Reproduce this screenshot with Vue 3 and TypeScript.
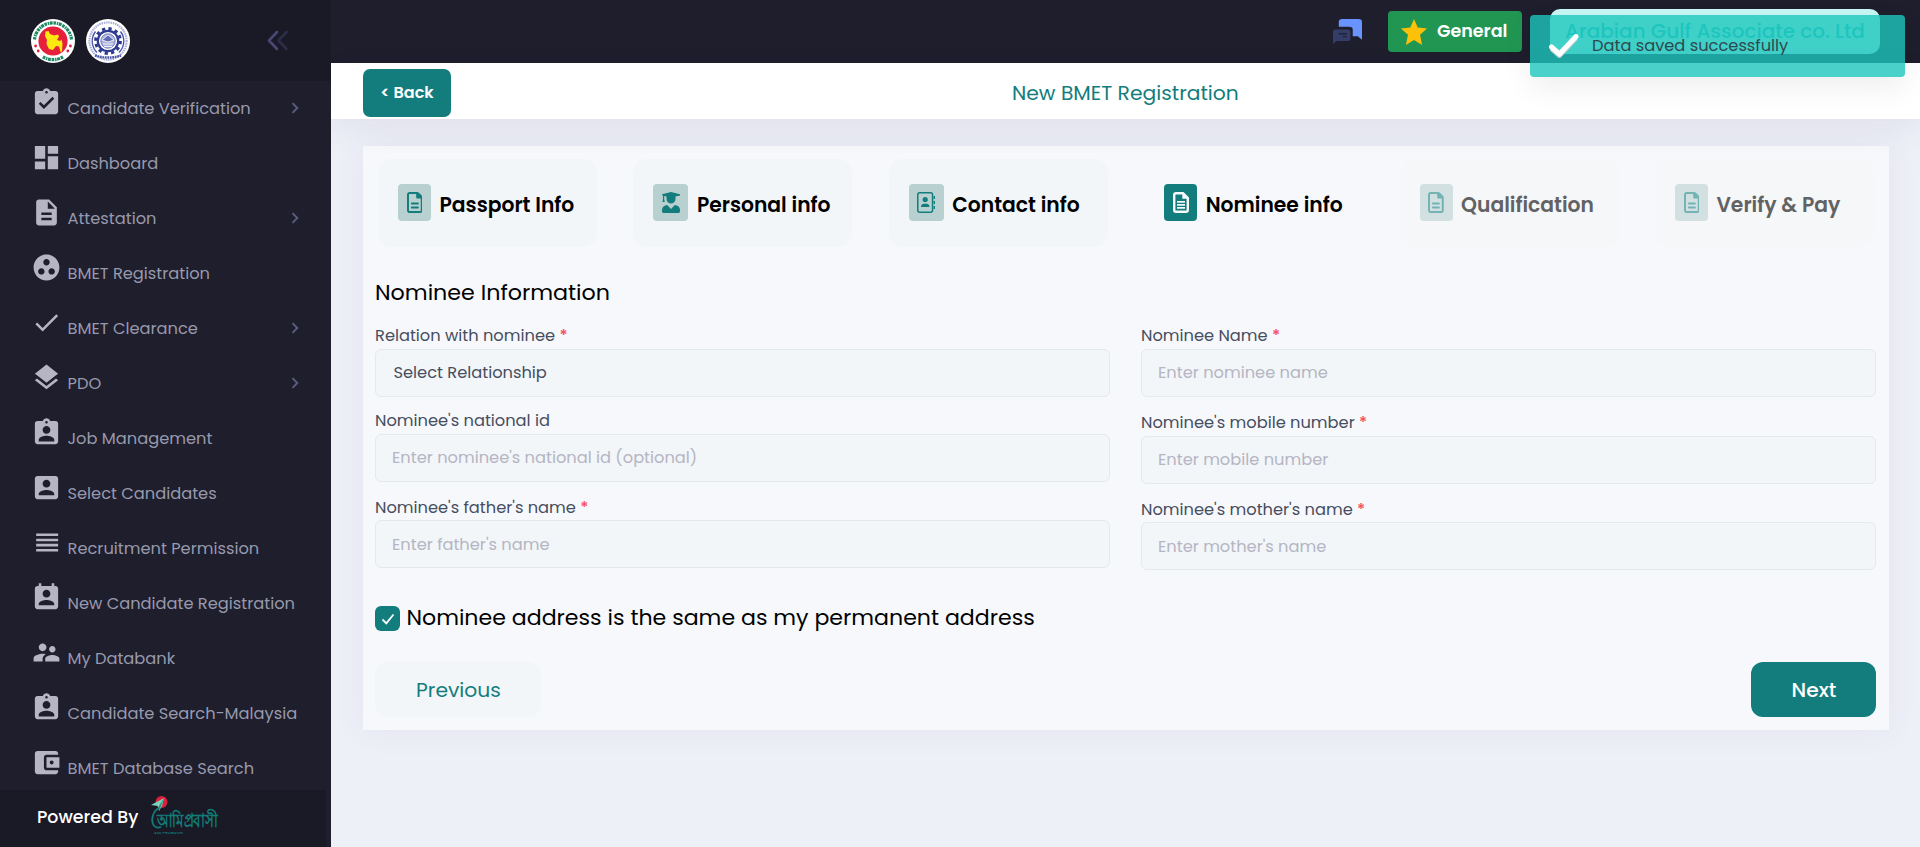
<script setup lang="ts">
import { ref } from 'vue'

interface MenuItem { label: string; icon: string; more?: boolean }
interface Step { label: string; icon: 'file' | 'grad' | 'book' | 'lines'; state: 'done' | 'active' | 'todo' }
interface Field { label: string; required: boolean; text: string; select?: boolean }

const clip = 'M19 3h-4.18C14.4 1.84 13.3 1 12 1c-1.3 0-2.4.84-2.82 2H5c-1.1 0-2 .9-2 2v14c0 1.1.9 2 2 2h14c1.1 0 2-.9 2-2V5c0-1.1-.9-2-2-2zm-7 0c.55 0 1 .45 1 1s-.45 1-1 1-1-.45-1-1 .45-1 1-1z'
const badge = clip + 'm0 4c1.66 0 3 1.34 3 3s-1.34 3-3 3-3-1.34-3-3 1.34-3 3-3zm6 12H6v-1.4c0-2 4-3.1 6-3.1s6 1.1 6 3.1V19z'

const menu: MenuItem[] = [
  { label: 'Candidate Verification', more: true, icon: clip + 'm-2 14l-4-4 1.41-1.41L10 14.17l6.59-6.59L18 9l-8 8z' },
  { label: 'Dashboard', icon: 'M3 13h8V3H3v10zm0 8h8v-6H3v6zm10 0h8V11h-8v10zm0-18v6h8V3h-8z' },
  { label: 'Attestation', more: true, icon: 'M14 2H6c-1.1 0-1.99.9-1.99 2L4 20c0 1.1.89 2 1.99 2H18c1.1 0 2-.9 2-2V8l-6-6zm2 16H8v-2h8v2zm0-4H8v-2h8v2zm-3-5V3.5L18.5 9H13z' },
  { label: 'BMET Registration', icon: 'M12 2C6.48 2 2 6.48 2 12s4.48 10 10 10 10-4.48 10-10S17.52 2 12 2zM8 17.5c-1.38 0-2.5-1.12-2.5-2.5s1.12-2.5 2.5-2.5 2.5 1.12 2.5 2.5-1.12 2.5-2.5 2.5zM9.5 8c0-1.38 1.12-2.5 2.5-2.5s2.5 1.12 2.5 2.5-1.12 2.5-2.5 2.5S9.5 9.38 9.5 8zm6.5 9.5c-1.38 0-2.5-1.12-2.5-2.5s1.12-2.5 2.5-2.5 2.5 1.12 2.5 2.5-1.12 2.5-2.5 2.5z' },
  { label: 'BMET Clearance', more: true, icon: 'M9 16.17L4.83 12l-1.42 1.41L9 19 21 7l-1.41-1.41z' },
  { label: 'PDO', more: true, icon: 'M11.99 18.54l-7.37-5.73L3 14.07l9 7 9-7-1.63-1.27-7.38 5.74zM12 16l7.36-5.73L21 9l-9-7-9 7 1.63 1.27L12 16z' },
  { label: 'Job Management', icon: badge },
  { label: 'Select Candidates', icon: 'M3 5v14c0 1.1.89 2 2 2h14c1.1 0 2-.9 2-2V5c0-1.1-.9-2-2-2H5c-1.11 0-2 .9-2 2zm12 4c0 1.66-1.34 3-3 3s-3-1.34-3-3 1.34-3 3-3 3 1.34 3 3zm-9 8c0-2 4-3.1 6-3.1s6 1.1 6 3.1v1H6v-1z' },
  { label: 'Recruitment Permission', icon: 'M4 15h17v-2H4v2zm0 4h17v-2H4v2zm0-8h17V9H4v2zm0-6v2h17V5H4z' },
  { label: 'New Candidate Registration', icon: 'M19 3h-1V1h-2v2H8V1H6v2H5c-1.11 0-2 .9-2 2v14c0 1.1.89 2 2 2h14c1.1 0 2-.9 2-2V5c0-1.1-.9-2-2-2zm-7 3c1.66 0 3 1.34 3 3s-1.34 3-3 3-3-1.34-3-3 1.34-3 3-3zm6 12H6v-1c0-2 4-3.1 6-3.1s6 1.1 6 3.1v1z' },
  { label: 'My Databank', icon: 'M16.5 12c1.38 0 2.49-1.12 2.49-2.5S17.88 7 16.5 7C15.12 7 14 8.12 14 9.5s1.12 2.5 2.5 2.5zM9 11c1.66 0 2.99-1.34 2.99-3S10.66 5 9 5C7.34 5 6 6.34 6 8s1.34 3 3 3zm7.5 3c-1.83 0-5.5.92-5.5 2.75V19h11v-2.25c0-1.83-3.67-2.75-5.5-2.75zM9 13c-2.33 0-7 1.17-7 3.5V19h7v-2.25c0-.85.33-2.34 2.37-3.47C10.5 13.1 9.66 13 9 13z' },
  { label: 'Candidate Search-Malaysia', icon: badge },
  { label: 'BMET Database Search', icon: 'M21 18v1c0 1.1-.9 2-2 2H5c-1.11 0-2-.9-2-2V5c0-1.1.89-2 2-2h14c1.1 0 2 .9 2 2v1h-9c-1.11 0-2 .9-2 2v8c0 1.1.89 2 2 2h9zm-9-2h10V8H12v8zm4-2.5c-.83 0-1.5-.67-1.5-1.5s.67-1.5 1.5-1.5 1.5.67 1.5 1.5-.67 1.5-1.5 1.5z' },
]

const steps: Step[] = [
  { label: 'Passport Info', icon: 'file', state: 'done' },
  { label: 'Personal info', icon: 'grad', state: 'done' },
  { label: 'Contact info', icon: 'book', state: 'done' },
  { label: 'Nominee info', icon: 'lines', state: 'active' },
  { label: 'Qualification', icon: 'file', state: 'todo' },
  { label: 'Verify & Pay', icon: 'file', state: 'todo' },
]

const columns: Field[][] = [
  [
    { label: 'Relation with nominee', required: true, text: 'Select Relationship', select: true },
    { label: "Nominee's national id", required: false, text: "Enter nominee's national id (optional)" },
    { label: "Nominee's father's name", required: true, text: "Enter father's name" },
  ],
  [
    { label: 'Nominee Name', required: true, text: 'Enter nominee name' },
    { label: "Nominee's mobile number", required: true, text: 'Enter mobile number' },
    { label: "Nominee's mother's name", required: true, text: "Enter mother's name" },
  ],
]

const sameAddress = ref(true)
</script>

<template>
  <div class="page">
    <aside class="side">
      <div class="brand">
        <svg class="seal" viewBox="0 0 44 44">
          <circle cx="22" cy="22" r="22" fill="#fff" />
          <path d="M3.500 20.500A18.600 18.600 0 0 1 40.500 20.500" fill="none" stroke="#1d8a63" stroke-width="3.200" stroke-dasharray="2.600 .8 1.400 .6 3 .8" />
          <path d="M12 37.800A18.600 18.600 0 0 0 32 37.800" fill="none" stroke="#1d8a63" stroke-width="3.200" stroke-dasharray="2.600 .8 1.400 .6 3 .8" />
          <circle cx="22" cy="22" r="14.600" fill="#e5203b" />
          <path fill="#fde910" d="M14.500 12.500l3-.5 1.500 3 4 1.500 4-1 1 2-2 3.500 3 1 1.500-1.500 1 4-.5 8-1.500.5-1.500-5.500-3-.5-3 4-4-1-2.500-5 .5-4-2-4z" />
          <g fill="#e5203b"><circle cx="4.600" cy="27" r="1.400" /><circle cx="7.200" cy="32" r="1.400" /><circle cx="39.400" cy="27" r="1.400" /><circle cx="36.800" cy="32" r="1.400" /></g>
        </svg>
        <svg class="seal" viewBox="0 0 44 44">
          <circle cx="22" cy="22" r="22" fill="#fff" />
          <circle cx="22" cy="22" r="18.600" fill="none" stroke="#a9aed8" stroke-width="2.200" stroke-dasharray="1.500 .8" />
          <path d="M9.500 12.500A15.800 15.800 0 0 0 11 33.500M34.500 12.500A15.800 15.800 0 0 1 33 33.500" fill="none" stroke="#4d57a8" stroke-width="1.400" />
          <circle cx="22" cy="22" r="12.400" fill="none" stroke="#2d3a8f" stroke-width="3" stroke-dasharray="3.250 3.250" />
          <circle cx="22" cy="22" r="10.200" fill="#fff" stroke="#2d3a8f" stroke-width="2.200" />
          <circle cx="22" cy="22" r="7.200" fill="#aeb5dc" stroke="#5f6ab2" stroke-width=".8" />
          <path d="M16 21l6-5 6 5-6 2zM17 25h10M18 27.500h8" fill="#5f6ab2" stroke="#fff" stroke-width=".8" />
          <path d="M9 36.500q13 4 26 0" fill="none" stroke="#4d57a8" stroke-width="2.400" stroke-dasharray="1.800 .7" />
        </svg>
        <svg class="collapse" viewBox="0 0 22 22" fill="none" stroke-width="2.600" stroke-linecap="round" stroke-linejoin="round">
          <path d="M19.500 2L11.500 10.500l8 8.500" stroke="#2e2c48" />
          <path d="M10 2L2 10.500l8 8.500" stroke="#494773" />
        </svg>
      </div>
      <nav class="menu">
        <a v-for="item in menu" :key="item.label" class="item">
          <svg class="item-icon" viewBox="0 0 24 24"><path :d="item.icon" /></svg>
          <span class="item-label">{{ item.label }}</span>
          <svg v-if="item.more" class="chevron" viewBox="0 0 8 12"><path d="M1.500 1.200L6.300 6l-4.800 4.800" /></svg>
        </a>
      </nav>
      <div class="powered">
        <span>Powered By</span>
        <svg class="logo" viewBox="0 0 68 42">
          <circle cx="10.500" cy="7" r="6" fill="#d9213c" />
          <path d="M0 10L13 3l-2 8-3 5-1-5z" fill="#7fd0bd" />
          <path d="M13 3l-5 8v5z" fill="#1f8f80" />
          <path d="M8 13C2 16 0 24 2 29c1.500 3.500 5 4 8 3" fill="none" stroke="#127c78" stroke-width="1.800" />
          <text x="6" y="31.500" textLength="61" lengthAdjust="spacingAndGlyphs" class="logo-text">আমিপ্রবাসী</text>
          <text x="3" y="38.500" textLength="29" lengthAdjust="spacingAndGlyphs" class="logo-small">AMI PROBASHI</text>
        </svg>
      </div>
    </aside>

    <main class="main">
      <header class="top">
        <svg class="chat" viewBox="0 0 25 26" preserveAspectRatio="none">
          <path d="M8 0h14a3 3 0 0 1 3 3v18.500l-3.600-3.500H17v-7a3 3 0 0 0-3-3H5V3a3 3 0 0 1 3-3z" fill="#6993ff" />
          <path d="M2.500 11h10A2.500 2.500 0 0 1 15 13.500v7a2.500 2.500 0 0 1-2.500 2.500H3L0 26V13.500A2.500 2.500 0 0 1 2.500 11z" fill="#333d67" />
          <path d="M5 15.500h7M8.500 18.500h3.500" stroke="#1e1e2d" stroke-width="1.200" />
        </svg>
        <div class="general">
          <svg viewBox="0 0 26 26"><path fill="#ffc107" d="M13 0l3.700 8.600 9.300.9-7 6.200 2.100 10.300L13 21l-8.100 5 2.100-10.300-7-6.200 9.300-.9z" /></svg>
          <span>General</span>
        </div>
        <div class="company">Arabian Gulf Associate co. Ltd</div>
      </header>

      <div class="titlebar">
        <button class="back">&lt; Back</button>
        <h1>New BMET Registration</h1>
      </div>

      <section class="card">
        <div class="steps">
          <div v-for="s in steps" :key="s.label" class="step" :class="s.state">
            <span class="step-icon" :class="s.icon">
              <svg v-if="s.icon === 'file'" viewBox="0 0 384 512"><path d="M365.3 93.38l-74.63-74.64C278.6 6.742 262.3 0 245.4 0H64C28.65 0 0 28.65 0 64l.0065 384c0 35.34 28.65 64 64 64H320c35.2 0 64-28.8 64-64V138.6C384 121.7 377.3 105.4 365.3 93.38zM336 448c0 8.836-7.164 16-16 16H64.02c-8.838 0-16-7.164-16-16L48 64.13c0-8.836 7.164-16 16-16h160L224 128c0 17.67 14.33 32 32 32h79.1V448zM96 280C96 293.3 106.8 304 120 304h144C277.3 304 288 293.3 288 280S277.3 256 264 256h-144C106.8 256 96 266.8 96 280zM264 352h-144C106.8 352 96 362.8 96 376s10.75 24 24 24h144c13.25 0 24-10.75 24-24S277.3 352 264 352z" /></svg>
              <svg v-else-if="s.icon === 'grad'" viewBox="0 0 18 21"><path d="M9 0l9 2.200v1.200l-4.500 1.100V7a4.500 4.500 0 0 1-9 0V4.500L2.200 4v3l.6 3H.5L1 7V3.400l-1-.4v-.8zM5.200 13L9 17l3.800-4c3 .3 5.200 2 5.200 5v1.200c0 1-.8 1.800-1.800 1.800H1.800C.8 21 0 20.200 0 19.200V18c0-3 2.200-4.700 5.200-5z" /></svg>
              <svg v-else-if="s.icon === 'book'" viewBox="0 0 18 21"><rect x=".75" y=".75" width="14.800" height="19.500" rx="2" fill="none" stroke="currentColor" stroke-width="1.500" /><circle cx="8.200" cy="7.500" r="2.600" /><path d="M4 15c0-2.200 1.500-3.200 3-3.200h2.500c1.500 0 3 1 3 3.200zM16.600 4H18v3h-1.400zM16.600 9H18v3h-1.400zM16.600 14H18v3h-1.400z" /></svg>
              <svg v-else viewBox="0 0 16 21"><path d="M3 1.200h7l4.800 4.800v12a1.800 1.800 0 0 1-1.800 1.800H3A1.800 1.800 0 0 1 1.200 18V3A1.800 1.800 0 0 1 3 1.200z" fill="none" stroke="currentColor" stroke-width="2.400" /><path d="M9.300 1v5.700H15v-1.200L10.500 1zM4 9h8v1.700H4zM4 12h8v1.700H4zM4 15h8v1.700H4z" /></svg>
            </span>
            <span class="step-label">{{ s.label }}</span>
          </div>
        </div>

        <h2>Nominee Information</h2>
        <div class="columns">
          <div v-for="(col, i) in columns" :key="i" class="column">
            <div v-for="f in col" :key="f.label" class="field" :class="{ optional: !f.required }">
              <label>{{ f.label }} <b v-if="f.required">*</b></label>
              <div class="control" :class="{ select: f.select }">{{ f.text }}</div>
            </div>
          </div>
        </div>

        <div class="same" @click="sameAddress = !sameAddress">
          <span class="box"><svg v-if="sameAddress" viewBox="0 0 14 12"><path d="M1.500 6.500l3.800 3.800L12.500 1.500" /></svg></span>
          <span class="same-label">Nominee address is the same as my permanent address</span>
        </div>

        <div class="actions">
          <button class="prev">Previous</button>
          <button class="next">Next</button>
        </div>
      </section>
    </main>

    <div class="toast">
      <svg viewBox="0 0 30 24"><path d="M2.500 13.500l8 7L27 3" fill="none" stroke="#b9cfd0" stroke-width="5" stroke-linejoin="round" transform="translate(0 1)" /><path d="M2.500 13l8 7L27 2.500" fill="none" stroke="#fff" stroke-width="5" stroke-linecap="round" stroke-linejoin="round" /></svg>
      <span>Data saved successfully</span>
    </div>
  </div>
</template>

<style>
body { margin: 0; overflow: hidden; }
</style>

<style scoped>
.page {
  position: relative;
  display: flex;
  width: 1920px;
  height: 847px;
  overflow: hidden;
  background: #eef0f8;
  font-family: Poppins, Inter, "Liberation Sans", sans-serif;
}
.page * { box-sizing: border-box; }
button { padding: 0; border: 0; font-family: inherit; }

.side { position: relative; z-index: 2; display: flex; flex-direction: column; width: 331px; background: #1e1e2d; }
.brand { display: flex; align-items: center; height: 81px; padding: 0 42px 0 31px; background: #1a1a27; }
.seal { width: 44px; height: 44px; margin-right: 11px; }
.collapse { width: 22px; height: 22px; margin-left: auto; }
.menu { height: 709px; overflow: hidden; }
.item { display: flex; align-items: center; height: 55px; padding: 0 32px 0 31px; color: #9899ac; font-size: 16.250px; }
.item-icon { width: 31px; height: 31px; margin: -12px 5.500px 0 0; fill: #b5b5c3; }
.item-label { white-space: nowrap; }
.chevron { width: 8px; height: 12px; margin: -1px 0 0 auto; fill: none; stroke: #5c5e81; stroke-width: 1.900; }
.powered { display: flex; align-items: center; width: 326px; height: 57px; padding: 0 0 4px 37px; background: #1a1a27; color: #fff; font-size: 17.400px; font-weight: 500; white-space: nowrap; }
.logo { width: 68px; height: 42px; margin: -1px 0 0 13px; overflow: visible; }
.logo-text { font-size: 19px; font-weight: 700; fill: #127c78; }
.logo-small { font-size: 3.500px; fill: #127c78; }

.main { display: flex; flex-direction: column; width: 1589px; }
.top { display: flex; align-items: flex-start; justify-content: flex-end; height: 63px; padding-right: 40px; background: #1e1e2d; }
.chat { width: 29px; height: 25px; margin: 19px 26px 0 0; }
.general { display: flex; align-items: center; width: 134px; height: 41px; margin: 11px 28px 0 0; padding: 0 0 1px 13px; border-radius: 4px; background: #219653; color: #fff; font-size: 17.500px; font-weight: 600; }
.general svg { width: 26px; height: 26px; margin: 1px 10px 0 0; }
.company { width: 330px; height: 45px; margin-top: 9px; border-radius: 10px; background: #c9f7f5; color: #1bc5bd; font-size: 20px; font-weight: 500; line-height: 45px; text-align: center; }

.titlebar { position: relative; z-index: 1; display: grid; grid-template-columns: 650px 1fr; height: 56px; padding: 0 32px; background: #fff; box-shadow: 0 10px 30px rgba(82, 63, 105, .08); }
.back { width: 88px; height: 48px; margin-top: 6px; padding-bottom: 2px; border-radius: 7px; background: #127d7c; color: #fff; font-size: 16px; font-weight: 600; }
.titlebar h1 { margin: 15px 0 0 -1px; color: #127d7c; font-size: 20.300px; font-weight: 400; line-height: 30px; white-space: nowrap; }

.card { width: 1526px; height: 584px; margin: 27px 0 0 32px; padding: 13px 12px; background: #f7f8fc; box-shadow: 0 0 30px rgba(82, 63, 105, .07); }
.steps { display: grid; grid-template-columns: repeat(6, 219px); justify-content: space-between; margin: 0 3px; }
.step { display: flex; align-items: center; height: 88px; padding-left: 20px; border-radius: 14px; background: #f2f6f8; color: #000; font-size: 20.300px; font-weight: 600; white-space: nowrap; }
.step.active { background: transparent; }
.step.todo { background: #f5f7f9; color: #626264; }
.step-label { padding-top: 3px; }
.step-icon { display: flex; justify-content: center; align-items: center; width: 33px; height: 37px; margin: -1px 8.500px 0 0; border-radius: 4px; background: #b9d0d0; color: #127d7c; }
.step-icon svg { height: 21px; fill: currentColor; }
.step-icon.grad, .step-icon.book { width: 35px; }
.active .step-icon { background: #127d7c; color: #f7f8fc; }
.todo .step-icon { background: #d2e0e1; color: #74b3b3; }

.card h2 { margin: 31px 0 0; color: #000; font-size: 22.200px; font-weight: 400; line-height: 30px; }
.columns { display: grid; grid-template-columns: 735px 735px; gap: 31px; margin-top: 18px; }
.field { height: 87px; }
.field.optional { margin-top: -2px; }
.field label { display: block; height: 23px; color: #464e5f; font-size: 16.250px; line-height: 20px; }
.field:last-child label { height: 22px; }
.field b { color: #f64e60; font-weight: 500; }
.control { height: 48px; padding-left: 16px; border: 1px solid #e4e9ee; border-radius: 6px; background: #f2f6f9; color: #b5b5c3; font-size: 16.250px; line-height: 46px; }
.field:last-child .control { line-height: 47px; }
.control.select { padding-left: 17.500px; color: #464e5f; }
.same { display: flex; align-items: center; gap: 6.500px; height: 25px; margin-top: 19px; color: #000; font-size: 22.100px; }
.same-label { margin-top: -2px; }
.box { display: grid; place-items: center; width: 25px; height: 25px; border-radius: 6px; background: #127d7c; }
.box svg { width: 14px; height: 12px; fill: none; stroke: #fff; stroke-width: 1.800; }
.actions { display: flex; justify-content: space-between; margin: 31px 1px 0 0; }
.actions button { height: 55px; padding: 1px 0 0 1px; border-radius: 12px; font-size: 20.300px; }
.prev { width: 166px; background: #f2f6f8; color: #127d7c; }
.actions .next { width: 125px; background: #127d7c; color: #fff; font-weight: 500; }

.toast { position: absolute; z-index: 3; top: 15px; left: 1530px; display: flex; align-items: center; width: 375px; height: 62px; padding: 0 0 1px 19px; border-radius: 4px; background: rgba(29, 197, 189, .8); color: #2c4a4f; font-size: 16.250px; box-shadow: 0 10px 30px rgba(0, 0, 0, .07); }
.toast svg { width: 30px; height: 24px; margin-right: 13px; }
</style>
